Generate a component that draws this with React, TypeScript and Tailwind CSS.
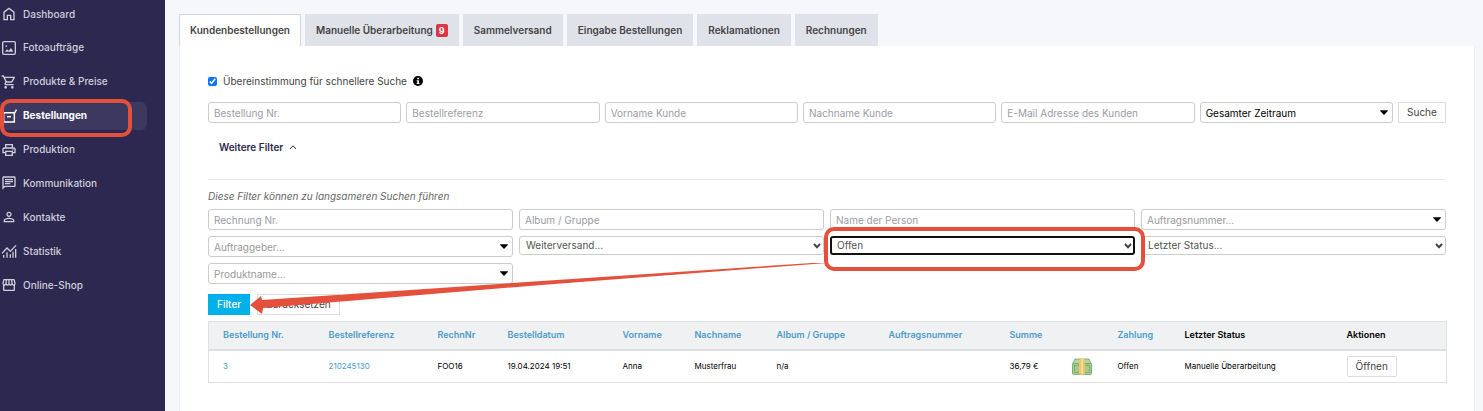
import React, { useState } from 'react';
import {
  MdOutlineChat,
  MdOutlinePrint,
  MdOutlineShoppingCart,
  MdOutlineStorefront,
  MdPersonOutline,
} from 'react-icons/md';

// --- Icons ---
type IconProps = { className?: string };

const HomeIcon = ({ className }: IconProps) => (
  <svg viewBox="0 0 24 24" fill="currentColor" className={className}>
    <path d="M5.500 19.500h3V13h7v6.500h3v-9.700L12 4.900l-6.500 4.900zM3.500 21.500V8.800L12 2.400l8.500 6.400v12.700h-7V15h-3v6.500z" />
  </svg>
);

const PhotoIcon = ({ className }: IconProps) => (
  <svg viewBox="0 0 24 24" fill="none" stroke="currentColor" strokeWidth="2" className={className}>
    <rect x="2.500" y="2.500" width="19" height="19" rx="2" />
    <path d="M6 17.500l3-3.500 2.500 2 3.500-4 3.500 5.500z" fill="currentColor" stroke="none" />
    <circle cx="8" cy="9" r="1.300" fill="currentColor" stroke="none" />
  </svg>
);

const BoxIcon = ({ className }: IconProps) => (
  <svg viewBox="0 0 24 24" fill="none" stroke="currentColor" strokeWidth="2.200" className={className}>
    <path d="M4 7v14h16V7M1 7h19.500M20 8l3.200-5.500M4 8L1.500 4" />
    <path d="M9 13h6" />
  </svg>
);

const StatsIcon = ({ className }: IconProps) => (
  <svg viewBox="0 0 24 24" fill="none" stroke="currentColor" strokeWidth="2" className={className}>
    <path d="M1.500 15.500L9 7.500l5 5 8.500-9" />
    <path d="M4 22v-4M9 22v-8M14 22v-5M18 22V13M22 22V9" />
  </svg>
);

const Caret = ({ className }: IconProps) => (
  <svg viewBox="0 0 8 5" fill="currentColor" className={className}>
    <path d="M0.500 0.300h7c0.500 0 0.600 0.500 0.300 0.800L4.500 4.600c-0.300 0.300-0.700 0.300-1 0L0.200 1.100C-0.100 0.800 0 0.300 0.500 0.300z" />
  </svg>
);

const Chevron = ({ className }: IconProps) => (
  <svg viewBox="0 0 8 6" fill="none" stroke="currentColor" className={className}>
    <path d="M1 1l3 3.200L7 1" />
  </svg>
);

const MoneyIcon = () => (
  <svg viewBox="0 0 20 17" className="h-[17px] w-5" role="img" aria-label="Zahlung offen">
    <path d="M3 1h14l2.500 5H0.500z" fill="#b4d6a2" stroke="#6fa662" strokeWidth="0.800" />
    <rect x="0.500" y="5.500" width="19" height="11" rx="1" fill="#a3cc90" stroke="#6fa662" strokeWidth="0.800" />
    <rect x="2.500" y="7.500" width="15" height="7" fill="none" stroke="#5f9a52" strokeWidth="0.800" strokeDasharray="2 1" />
    <circle cx="10" cy="11" r="2.500" fill="#5f9a52" />
    <path d="M7.500 1h5l0.500 4.500v11H7V5.500z" fill="#f3c366" />
    <path d="M9.300 1h1.600v15.500H9.300z" fill="#fbe0a0" />
  </svg>
);

// --- Sidebar ---
const navItems = [
  { label: 'Dashboard', icon: HomeIcon },
  { label: 'Fotoaufträge', icon: PhotoIcon },
  { label: 'Produkte & Preise', icon: MdOutlineShoppingCart },
  { label: 'Bestellungen', icon: BoxIcon, active: true },
  { label: 'Produktion', icon: MdOutlinePrint },
  { label: 'Kommunikation', icon: MdOutlineChat },
  { label: 'Kontakte', icon: MdPersonOutline },
  { label: 'Statistik', icon: StatsIcon },
  { label: 'Online-Shop', icon: MdOutlineStorefront },
];

const Sidebar = () => (
  <aside className="w-[165px] shrink-0 bg-[#2d2850]">
    <nav className="flex h-[299px] flex-col justify-between pr-[18px]">
      {navItems.map(({ label, icon: Icon, active }) => (
        <a
          key={label}
          href="#"
          className={`relative flex h-7 items-center gap-1.5 rounded-r-md pl-px text-[10px] ${
            active ? 'bg-[#3d385f] font-bold text-white' : 'font-medium text-[#d0cedb]'
          }`}
        >
          <Icon className="size-4 shrink-0" />
          {label}
          {active && (
            <span className="pointer-events-none absolute -top-[3px] -bottom-[7px] left-0 w-[132px] rounded-[10px] border-4 border-[#e5503c]" />
          )}
        </a>
      ))}
    </nav>
  </aside>
);

// --- Form controls ---
const fieldClass =
  'h-[21px] w-full min-w-0 rounded-[3px] border border-[#ccc] bg-white px-[5px] text-[10px] leading-4 placeholder:text-[#9a9ca8]';

const TextField = ({ label }: { label: string }) => (
  <input type="text" aria-label={label} placeholder={label} className={fieldClass} />
);

const ComboField = ({ label, dark }: { label: string; dark?: boolean }) => (
  <div className="relative min-w-0">
    <select
      aria-label={label}
      className={`${fieldClass} block appearance-none ${dark ? 'text-black' : 'text-[#999]'}`}
    >
      <option>{label}</option>
    </select>
    <Caret className="pointer-events-none absolute top-2 right-[5px] h-[5px] w-2 text-black" />
  </div>
);

const SelectField = ({ label, focused }: { label: string; focused?: boolean }) => (
  <div className="relative min-w-0 self-start">
    <select
      aria-label={label}
      className={`block h-[19px] w-full appearance-none rounded-[3px] bg-white text-[10px] leading-[15px] text-[#555] ${
        focused ? 'border-2 border-[#111] px-[5px]' : 'border border-[#ccc] px-1.5'
      }`}
    >
      <option>{label}</option>
    </select>
    <Chevron className="pointer-events-none absolute top-[7px] right-[3px] h-1.5 w-2 stroke-2 text-[#444]" />
    {focused && (
      <span className="pointer-events-none absolute -top-[9px] -right-[10px] -bottom-[16px] -left-[6px] z-10 rounded-[10px] border-4 border-[#e5503c]" />
    )}
  </div>
);

// --- Tabs ---
const tabs = [
  { label: 'Kundenbestellungen' },
  { label: 'Manuelle Überarbeitung', count: 9 },
  { label: 'Sammelversand' },
  { label: 'Eingabe Bestellungen' },
  { label: 'Reklamationen' },
  { label: 'Rechnungen' },
];

const Tabs = () => {
  const [current, setCurrent] = useState(tabs[0].label);

  return (
    <div role="tablist" className="flex gap-1">
      {tabs.map(({ label, count }) => (
        <button
          key={label}
          role="tab"
          aria-selected={label === current}
          onClick={() => setCurrent(label)}
          className={`flex h-8 items-center gap-[3px] border border-b-0 px-[10px] text-[10px] font-semibold whitespace-nowrap text-[#444] ${
            label === current ? 'border-[#d4d6dc] bg-white' : 'border-[#e0e2ea] bg-[#e0e2ea]'
          }`}
        >
          {label}
          {count && (
            <span className="rounded-[2px] bg-[#dc3545] px-[3px] text-[9px] leading-[13px] font-bold text-white">{count}</span>
          )}
        </button>
      ))}
    </div>
  );
};

// --- Orders table ---
const columns = [
  { label: 'Bestellung Nr.', width: 'w-[106px]' },
  { label: 'Bestellreferenz', width: 'w-[109px]' },
  { label: 'RechnNr', width: 'w-[70px]' },
  { label: 'Bestelldatum', width: 'w-[115px]' },
  { label: 'Vorname', width: 'w-[72px]' },
  { label: 'Nachname', width: 'w-[82px]' },
  { label: 'Album / Gruppe', width: 'w-[112px]' },
  { label: 'Auftragsnummer', width: 'w-[121px]' },
  { label: 'Summe', width: 'w-[62px]' },
  { label: '', width: 'w-[46px]' },
  { label: 'Zahlung', width: 'w-[67px]' },
  { label: 'Letzter Status', width: 'w-[162px]', plain: true },
  { label: 'Aktionen', width: 'w-[114px]', plain: true },
];

const OrdersTable = () => (
  <table className="mt-1.5 w-full table-fixed border-collapse border border-[#dee0e3] text-left whitespace-nowrap text-black">
    <thead className="text-[9px]">
      <tr className="h-[28px] border-b-2 border-[#dcdee0] bg-[#f0f1f3]">
        {columns.map(({ label, width, plain }) => (
          <th key={label} className={`${width} p-0 pb-0.5 pl-[14px] font-semibold ${plain ? 'text-black' : 'text-[#4a9cc9]'}`}>
            {plain || !label ? label : <a href="#">{label}</a>}
          </th>
        ))}
      </tr>
    </thead>
    <tbody className="text-[8px]">
      <tr className="h-[33px] [&>td]:p-0 [&>td]:pl-[14px]">
        <td><a href="#" className="text-[#4a9cc9]">3</a></td>
        <td><a href="#" className="text-[#4a9cc9]">210245130</a></td>
        <td>FOO16</td>
        <td>19.04.2024 19:51</td>
        <td>Anna</td>
        <td>Musterfrau</td>
        <td>n/a</td>
        <td></td>
        <td>36,79 €</td>
        <td><MoneyIcon /></td>
        <td>Offen</td>
        <td>Manuelle Überarbeitung</td>
        <td>
          <button className="h-[21px] rounded-[2px] border border-[#ddd] bg-white px-2 text-[10px] text-[#444]">Öffnen</button>
        </td>
      </tr>
    </tbody>
  </table>
);

const App: React.FC = () => {
  const [exact, setExact] = useState(true);

  return (
    <div className="flex min-h-screen bg-[#f6f7fa] font-['Inter',sans-serif] text-[10px] text-[#444]">
      <Sidebar />
      <main className="flex min-w-0 flex-1 flex-col pt-[14px] pr-2 pl-[14px]">
        <Tabs />
        <section className="flex-1 border-x border-[#eceef2] bg-white px-7 pt-[27px]">
          <div className="flex h-4 items-center gap-1.5">
            <label className="flex items-center gap-1.5">
              <input type="checkbox" checked={exact} onChange={e => setExact(e.target.checked)} className="size-[9px] accent-[#0d75ff]" />
              Übereinstimmung für schnellere Suche
            </label>
            <svg viewBox="0 0 10 10" className="size-[10px]" role="img" aria-label="Info">
              <circle cx="5" cy="5" r="5" fill="#000" />
              <path d="M4.200 1.800h1.700v1.500H4.200zM3.700 4.200h2.200v2.900h0.600v1H3.600v-1h0.600V5.200H3.700z" fill="#fff" />
            </svg>
          </div>

          <form onSubmit={e => e.preventDefault()}>
            <div className="mt-[13px] grid grid-cols-[repeat(6,minmax(0,1fr))_48px] gap-[5px]">
              <TextField label="Bestellung Nr." />
              <TextField label="Bestellreferenz" />
              <TextField label="Vorname Kunde" />
              <TextField label="Nachname Kunde" />
              <TextField label="E-Mail Adresse des Kunden" />
              <ComboField label="Gesamter Zeitraum" dark />
              <button className="h-[21px] border border-[#ddd] bg-white">Suche</button>
            </div>

            <button type="button" className="mt-[14px] ml-[11px] flex h-5 items-center gap-1.5 font-semibold text-[#2d2850]">
              Weitere Filter
              <Chevron className="h-1.5 w-2 rotate-180" />
            </button>

            <hr className="mt-[22px] border-[#e9e9ec]" />
            <p className="mt-2 leading-4 text-[#666] italic">Diese Filter können zu langsameren Suchen führen</p>

            <div className="relative mt-[5px]">
              <div className="grid grid-cols-4 gap-[6px]">
                <TextField label="Rechnung Nr." />
                <TextField label="Album / Gruppe" />
                <TextField label="Name der Person" />
                <ComboField label="Auftragsnummer..." />
                <ComboField label="Auftraggeber..." />
                <SelectField label="Weiterversand..." />
                <SelectField label="Offen" focused />
                <SelectField label="Letzter Status..." />
                <ComboField label="Produktname..." />
              </div>

              <div className="mt-[10px] flex gap-[7px]">
                <button className="h-[21px] bg-[#00b0e8] px-[9px] font-medium text-white">Filter</button>
                <button type="reset" className="h-[21px] border border-[#ddd] bg-white px-2">Zurücksetzen</button>
              </div>

              {/* arrow from the payment status to the filter button */}
              <svg
                viewBox="0 0 574 54"
                preserveAspectRatio="none"
                className="pointer-events-none absolute right-1/2 -bottom-0.5 left-[42px] h-[54px] w-[calc(50%-42px)]"
              >
                <path d="M0 42L11 33L12 37L290 18L574 -1V0L290 22L13 45L12 51Z" fill="#e5503c" />
              </svg>
            </div>
          </form>

          <OrdersTable />
        </section>
      </main>
    </div>
  );
};

export default App;
